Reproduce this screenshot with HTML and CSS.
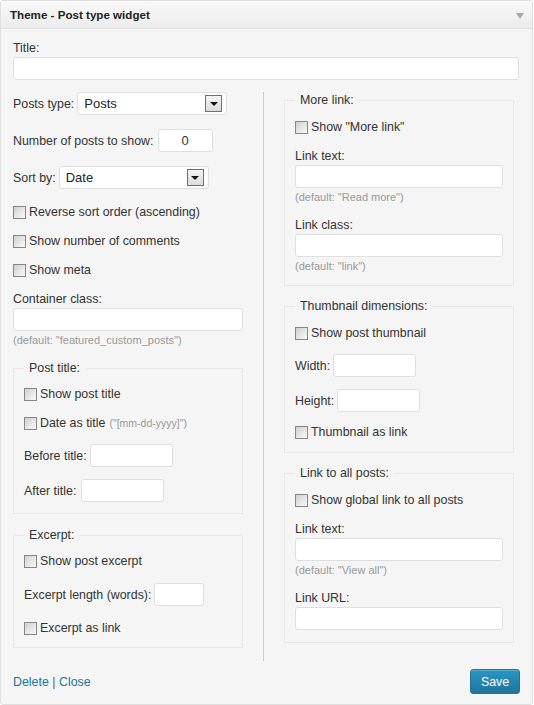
FILE: index.html
```html
<!DOCTYPE html>
<html>
<head>
<meta charset="utf-8">
<link rel="stylesheet" href="styles.css">
</head>
<body>
<div class="widget">
  <div class="widget-top">
    <h3 class="widget-title">Theme - Post type widget</h3>
    <span class="toggle"></span>
  </div>
  <div class="widget-inside">
    <div class="title-field">
      <label class="lbl">Title:</label>
      <input class="txt full" type="text">
    </div>
    <div class="cols">
      <div class="col col-left">
        <div class="row">
          <span class="rlbl">Posts type:</span>
          <div class="select"><span class="sel-val">Posts</span><span class="sel-btn"></span></div>
        </div>
        <div class="row mt14">
          <span class="rlbl">Number of posts to show:</span>
          <input class="txt num" type="text" value="0">
        </div>
        <div class="row mt14">
          <span class="rlbl">Sort by:</span>
          <div class="select"><span class="sel-val">Date</span><span class="sel-btn"></span></div>
        </div>
        <label class="cb mt15"><span class="box"></span>Reverse sort order (ascending)</label>
        <label class="cb"><span class="box"></span>Show number of comments</label>
        <label class="cb"><span class="box"></span>Show meta</label>
        <div class="field mt12">
          <label class="lbl">Container class:</label>
          <input class="txt full" type="text">
          <div class="hint">(default: "featured_custom_posts")</div>
        </div>
        <fieldset class="fs">
          <legend>Post title:</legend>
          <label class="cb first"><span class="box"></span>Show post title</label>
          <label class="cb"><span class="box"></span>Date as title <small class="note">("[mm-dd-yyyy]")</small></label>
          <div class="row">
            <span class="rlbl">Before title:</span>
            <input class="txt short" type="text">
          </div>
          <div class="row mt12">
            <span class="rlbl after">After title:</span>
            <input class="txt short" type="text">
          </div>
        </fieldset>
        <fieldset class="fs">
          <legend>Excerpt:</legend>
          <label class="cb first"><span class="box"></span>Show post excerpt</label>
          <div class="row mt14">
            <span class="rlbl">Excerpt length (words):</span>
            <input class="txt tiny" type="text">
          </div>
          <label class="cb mt14"><span class="box"></span>Excerpt as link</label>
        </fieldset>
      </div>
      <div class="col col-right">
        <fieldset class="fs top">
          <legend>More link:</legend>
          <label class="cb first"><span class="box"></span>Show "More link"</label>
          <div class="field">
            <label class="lbl">Link text:</label>
            <input class="txt full" type="text">
            <div class="hint">(default: "Read more")</div>
          </div>
          <div class="field mt14">
            <label class="lbl">Link class:</label>
            <input class="txt full" type="text">
            <div class="hint">(default: "link")</div>
          </div>
        </fieldset>
        <fieldset class="fs">
          <legend>Thumbnail dimensions:</legend>
          <label class="cb first"><span class="box"></span>Show post thumbnail</label>
          <div class="row">
            <span class="rlbl">Width:</span>
            <input class="txt short" type="text">
          </div>
          <div class="row mt12">
            <span class="rlbl">Height:</span>
            <input class="txt short" type="text">
          </div>
          <label class="cb mt12"><span class="box"></span>Thumbnail as link</label>
        </fieldset>
        <fieldset class="fs">
          <legend>Link to all posts:</legend>
          <label class="cb first"><span class="box"></span>Show global link to all posts</label>
          <div class="field">
            <label class="lbl">Link text:</label>
            <input class="txt full" type="text">
            <div class="hint">(default: "View all")</div>
          </div>
          <div class="field">
            <label class="lbl">Link URL:</label>
            <input class="txt full" type="text">
          </div>
        </fieldset>
      </div>
    </div>
    <div class="actions">
      <div class="links"><a href="#" class="link">Delete</a> <span class="sep">|</span> <a href="#" class="link">Close</a></div>
      <button class="save" type="button">Save</button>
    </div>
  </div>
</div>
</body>
</html>
```

FILE: styles.css
```css
* { box-sizing: border-box; }
html, body { margin: 0; padding: 0; background: #fff; }
body {
  font-family: "Liberation Sans", Arial, sans-serif;
  font-size: 12.4px;
  line-height: 16px;
  color: #333;
}
.widget {
  width: 533px;
  border: 1px solid #dfdfdf;
  border-radius: 3px;
  background: #f5f5f5;
  overflow: hidden;
}
.widget-top {
  height: 28px;
  border-bottom: 1px solid #dfdfdf;
  background: linear-gradient(to bottom, #f9f9f9, #ececec);
  display: flex;
  align-items: center;
  justify-content: space-between;
  padding: 0 8px 0 9px;
}
.widget-title {
  margin: 0;
  font-size: 11.6px;
  font-weight: bold;
  color: #222;
}
.toggle {
  width: 0;
  height: 0;
  border-left: 4px solid transparent;
  border-right: 4px solid transparent;
  border-top: 6px solid #a8a8a8;
  margin-top: 3px;
}
.widget-inside {
  padding: 11px 12px 10px 12px;
}
.lbl { display: block; }
.txt {
  display: block;
  height: 23px;
  margin: 1px 0 0 0;
  padding: 0 6px;
  border: 1px solid #dfdfdf;
  border-radius: 3px;
  background: #fff;
  font-family: "Liberation Sans", Arial, sans-serif;
  font-size: 12px;
  color: #333;
  outline: none;
}
.txt.full { width: 100%; }
.title-field .txt { width: 506px; }
.txt.num { width: 55px; text-align: center; margin: 0 0 0 1px; font-size: 13px; }
.txt.short { width: 83px; margin: 0; }
.txt.tiny { width: 50px; margin: 0; }
.hint {
  margin-top: 2px;
  font-size: 11px;
  line-height: 14px;
  color: #999;
}
.cols {
  display: flex;
  margin-top: 12px;
}
.col-left {
  width: 251px;
  padding-right: 20px;
  padding-bottom: 13px;
  border-right: 1px solid #ccc;
}
.col-right {
  width: 250px;
  padding-left: 20px;
}
.row {
  display: flex;
  align-items: center;
  gap: 3px;
  height: 23px;
  margin-top: 13px;
}
.row:first-child { margin-top: 0; }
.rlbl { white-space: nowrap; }
.rlbl.after { margin-right: 2px; }
.select {
  width: 150px;
  height: 23px;
  border: 1px solid #dfdfdf;
  border-radius: 3px;
  background: #fff;
  display: flex;
  align-items: center;
  justify-content: space-between;
  padding: 0 4px 0 6px;
}
.sel-val { font-size: 13px; color: #222; }
.sel-btn {
  width: 17px;
  height: 17px;
  border: 1px solid #707070;
  background: linear-gradient(to bottom, #f4f4f4, #dcdcdc);
  display: flex;
  align-items: center;
  justify-content: center;
}
.sel-btn::before {
  content: "";
  width: 0;
  height: 0;
  border-left: 4px solid transparent;
  border-right: 4px solid transparent;
  border-top: 4px solid #111;
  margin-top: 1px;
}
.cb {
  display: flex;
  align-items: center;
  height: 16px;
  margin-top: 13px;
  white-space: nowrap;
}
.cb .box {
  width: 13px;
  height: 13px;
  flex: none;
  margin-right: 3px;
  border: 1px solid #868686;
  background: linear-gradient(135deg, #d0d0d0 0%, #ededed 70%, #fafafa 100%);
}
.cb.first { margin-top: 10px; }
.note { font-size: 10.5px; color: #999; margin-left: 4px; }
.mt12 { margin-top: 12px; }
.mt14 { margin-top: 14px; }
.mt15 { margin-top: 15px; }
.field { margin-top: 13px; }
.fs {
  margin: 13px 0 0 0;
  padding: 0 10px 11px 10px;
  border: 1px solid #e8e8e8;
  min-width: 0;
}
.fs legend {
  padding: 0 5px;
  line-height: 16px;
  color: #333;
}
.col-right .fs { margin-top: 12px; padding-bottom: 12px; }
.col-right .fs.top { margin-top: 0; }
.col-right .fs .cb.first { margin-top: 11px; }
.actions {
  display: flex;
  justify-content: space-between;
  align-items: center;
  padding-top: 8px;
}
.links { font-size: 12.4px; }
.link { color: #21759b; text-decoration: none; }
.sep { color: #6a4a7a; }
.save {
  width: 50px;
  height: 25px;
  border: 1px solid #21759b;
  border-radius: 3px;
  background: linear-gradient(to bottom, #2a95c5, #21759b);
  color: #fff;
  font-family: "Liberation Sans", Arial, sans-serif;
  font-size: 12.4px;
  padding: 0;
  box-shadow: inset 0 1px 0 rgba(120,200,230,0.5);
}
```
